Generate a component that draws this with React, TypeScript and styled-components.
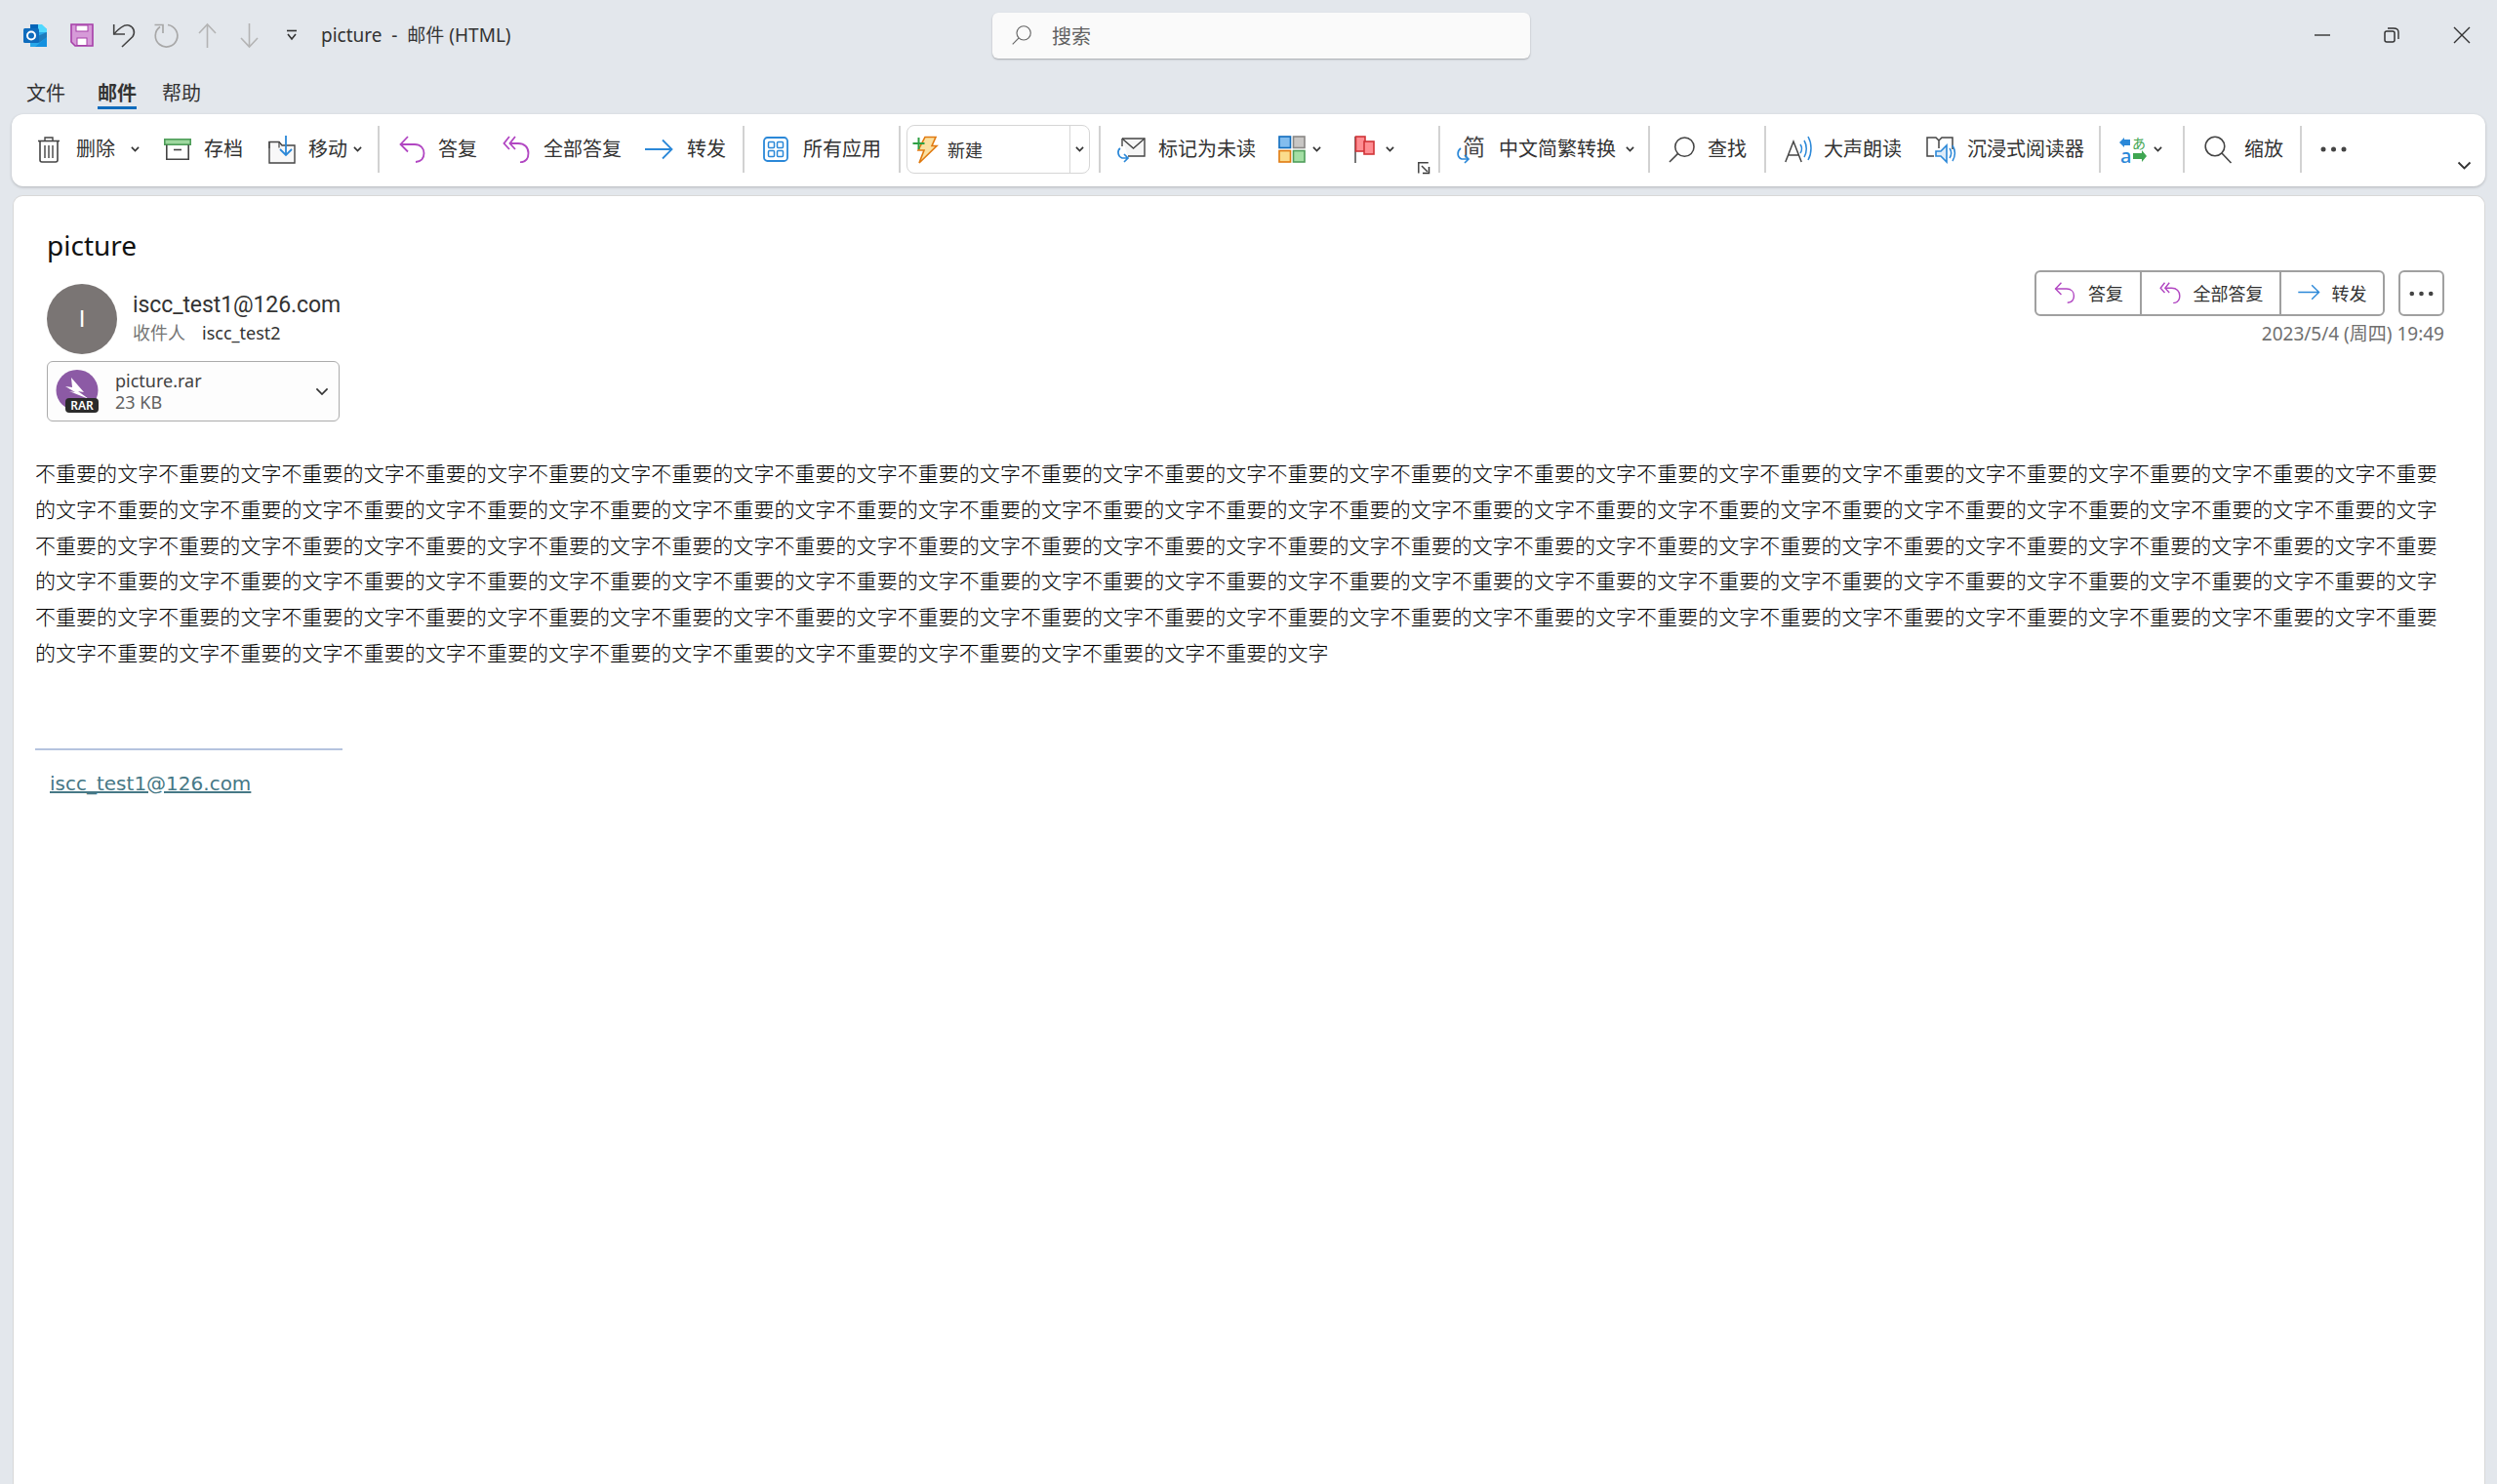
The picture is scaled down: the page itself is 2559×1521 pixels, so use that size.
import styled, { createGlobalStyle } from "styled-components"
import { ReactNode } from "react"

const GlobalStyle = createGlobalStyle`
  html, body {
    margin: 0;
    padding: 0;
    height: 100%;
    overflow: hidden;
    background: #e3e7ec;
  }
  body {
    font-family: "Noto Sans", "Noto Sans CJK SC", sans-serif;
    color: #242424;
  }
  * { box-sizing: border-box; }
`

const Page = styled.div`
  width: 2559px;
  height: 1521px;
  display: flex;
  flex-direction: column;
  background: #e3e7ec;
`

const TitleBar = styled.div`
  height: 72px;
  display: grid;
  grid-template-columns: 1017px 551px 1fr;
  align-items: center;
`

const QuickAccess = styled.div`
  display: flex;
  align-items: center;
  padding-left: 24px;
`

const QuickSlot = styled.span<{ $ml?: number }>`
  display: flex;
  margin-left: ${p => p.$ml ?? 0}px;
`

const WindowTitle = styled.span`
  margin-left: 24px;
  padding-bottom: 2px;
  font-size: 19px;
  color: #333;
  white-space: pre;
`

const SearchBox = styled.div`
  height: 47px;
  display: flex;
  align-items: center;
  gap: 21px;
  padding-left: 20px;
  background: #fafafa;
  border-radius: 6px;
  box-shadow: 0 1px 2px rgba(0, 0, 0, 0.28);
  font-size: 20px;
  color: #616161;
`

const WindowControls = styled.div`
  display: flex;
  align-items: center;
  justify-content: flex-end;
  gap: 55px;
  padding-right: 27px;
`

const MenuRow = styled.div`
  height: 45px;
  display: flex;
  gap: 26px;
  padding-left: 27px;
`

const MenuTab = styled.div<{ $active?: boolean }>`
  height: 40px;
  margin-left: ${p => (p.$active ? 7 : 0)}px;
  padding-top: 9px;
  line-height: 30px;
  font-size: 20px;
  font-weight: ${p => (p.$active ? 700 : 400)};
  color: #333;
  border-bottom: 3px solid ${p => (p.$active ? "#0f6cbd" : "transparent")};
`

const Ribbon = styled.div`
  height: 74px;
  margin: 0 12px;
  padding: 0 0 2px 26px;
  display: flex;
  align-items: center;
  background: #fff;
  border-radius: 12px;
  box-shadow: 0 1px 3px rgba(0, 0, 0, 0.22);
`

const RibbonItem = styled.div<{ $ml?: number; $gap?: number }>`
  display: flex;
  align-items: center;
  flex: none;
  margin-left: ${p => p.$ml ?? 0}px;
  gap: ${p => p.$gap ?? 13}px;
  font-size: 20px;
  line-height: 28px;
  color: #333;
  white-space: nowrap;
`

const Separator = styled.div<{ $ml: number }>`
  width: 2px;
  height: 48px;
  flex: none;
  margin-left: ${p => p.$ml}px;
  background: #d2d2d2;
`

const NewBox = styled.div`
  width: 188px;
  height: 50px;
  flex: none;
  margin-left: 6px;
  display: flex;
  align-items: center;
  border: 1px solid #d6d6d6;
  border-radius: 8px;
  font-size: 18px;
  color: #333;
`

const NewMain = styled.div`
  flex: 1;
  height: 100%;
  display: flex;
  align-items: center;
  gap: 10px;
  padding-left: 5px;
  border-right: 1px solid #d6d6d6;
`

const NewArrow = styled.div`
  width: 19px;
  display: flex;
  justify-content: center;
`

const Launcher = styled.span`
  display: flex;
  align-self: flex-end;
  margin: 0 0 11px 24px;
`

const Collapse = styled.span`
  display: flex;
  align-self: flex-end;
  margin: 0 14px 15px auto;
`

const Card = styled.div`
  flex: 1;
  margin: 9px 12px 0 13px;
  background: #fff;
  border: 1px solid #d8d8d8;
  border-bottom: 0;
  border-radius: 10px 10px 0 0;
`

const MessageHead = styled.div`
  display: flex;
  justify-content: space-between;
  padding: 31px 41px 0 34px;
`

const SubjectColumn = styled.div`
  display: flex;
  flex-direction: column;
`

const Subject = styled.div`
  height: 38px;
  line-height: 38px;
  font-size: 28px;
  color: #111;
`

const SenderRow = styled.div`
  display: flex;
  gap: 16px;
  margin-top: 21px;
`

const Avatar = styled.div`
  width: 72px;
  height: 72px;
  border-radius: 50%;
  display: flex;
  align-items: center;
  justify-content: center;
  background: #7a7574;
  color: #fff;
  font-family: "Liberation Sans", sans-serif;
  font-size: 24px;
`

const SenderText = styled.div`
  display: flex;
  flex-direction: column;
  padding-top: 6px;
`

const SenderName = styled.div`
  height: 31px;
  line-height: 32px;
  font-family: Roboto, sans-serif;
  font-size: 23px;
  letter-spacing: -0.1px;
  color: #333;
`

const Recipients = styled.div`
  display: flex;
  gap: 17px;
  line-height: 26px;
  font-size: 18px;
  color: #333;
`

const ToLabel = styled.span`
  color: #757575;
`

const Attachment = styled.div`
  width: 300px;
  height: 62px;
  margin-top: 7px;
  padding: 0 10px 0 8px;
  display: flex;
  align-items: center;
  border: 1px solid #ababab;
  border-radius: 6px;
  background: #fdfdfd;
`

const AttachmentInfo = styled.div`
  flex: 1;
  margin-left: 17px;
  font-size: 18px;
  line-height: 22px;
  color: #424242;
`

const AttachmentSize = styled.div`
  color: #616161;
`

const ActionColumn = styled.div`
  display: flex;
  flex-direction: column;
  align-items: flex-end;
  padding-top: 45px;
`

const ActionRow = styled.div`
  display: flex;
  gap: 14px;
`

const ActionGroup = styled.div`
  height: 47px;
  display: flex;
  border: 2px solid #a0a0a0;
  border-radius: 6px;
`

const ActionButton = styled.div<{ $width: number }>`
  width: ${p => p.$width}px;
  display: flex;
  align-items: center;
  justify-content: center;
  gap: 12px;
  padding-bottom: 2px;
  font-size: 18px;
  color: #333;
  & + & {
    border-left: 2px solid #a0a0a0;
  }
`

const MoreButton = styled.div`
  width: 47px;
  height: 47px;
  display: flex;
  align-items: center;
  justify-content: center;
  border: 2px solid #a0a0a0;
  border-radius: 6px;
`

const DateText = styled.div`
  margin-top: 6px;
  line-height: 24px;
  font-size: 19px;
  color: #707070;
`

const Body = styled.div`
  padding: 35px 0 0 22px;
`

const BodyText = styled.div`
  width: 2470px;
  font-size: 21px;
  font-weight: 300;
  letter-spacing: 0.04px;
  line-height: 36.8px;
  color: #000;
`

const Signature = styled.div`
  width: 315px;
  margin-top: 79px;
  border-top: 2px solid #b5c4df;
`

const SignatureLink = styled.a`
  display: block;
  margin: 21px 0 0 15px;
  font-family: "DejaVu Sans", sans-serif;
  font-size: 20px;
  line-height: 26px;
  color: #467886;
  text-decoration: underline;
`

const Svg = ({ w, h, children }: { w: number; h: number; children: ReactNode }) => (
  <svg width={w} height={h} viewBox={`0 0 ${w} ${h}`} fill="none" overflow="visible" style={{ flex: "none", display: "block" }}>
    {children}
  </svg>
)

const Chevron = ({ size = 9, color = "#333" }: { size?: number; color?: string }) => (
  <svg width={size} height={size * 0.6} viewBox="0 0 10 6" fill="none" style={{ flex: "none" }}>
    <path d="M1 1l4 4 4-4" stroke={color} strokeWidth={size > 12 ? 1.2 : 1.8} />
  </svg>
)

const OutlookIcon = () => (
  <Svg w={24} h={24}>
    <path d="M7 1h11l6 5v18H7z" fill="#28a8ea" />
    <path d="M7 1h8v6H7z" fill="#0364b8" />
    <path d="M15 1h4l5 5v3h-9z" fill="#50d9ff" />
    <path d="M12 24l12-10v10z" fill="#1490df" />
    <path d="M12 14l12-5v5l-8 6z" fill="#0a2767" opacity="0.35" />
    <rect x="0" y="5" width="16" height="15" rx="1.5" fill="#0f6cbd" />
    <circle cx="8" cy="12.5" r="4" stroke="#fff" strokeWidth="2" />
  </Svg>
)

const SaveIcon = () => (
  <Svg w={24} h={24}>
    <path d="M1 1h22v22H5l-4-4z" fill="#d69ad8" stroke="#a63fa8" strokeWidth="1.6" />
    <rect x="6" y="2" width="12" height="6" fill="#fff" stroke="#a63fa8" strokeWidth="1" />
    <rect x="7" y="15" width="10" height="7.5" fill="#fff" stroke="#a63fa8" strokeWidth="1" />
  </Svg>
)

const UndoIcon = () => (
  <Svg w={24} h={25}>
    <path d="M1.700 1v10H13" stroke="#444" strokeWidth="1.6" />
    <path d="M1.700 11C7 5 12 0.500 17 2c5 1.500 7 7 4 11.500L10 24" stroke="#444" strokeWidth="1.6" />
  </Svg>
)

const RedoIcon = () => (
  <Svg w={26} h={25}>
    <path d="M7 3.500A11.300 11.300 0 1 0 15 1.500" stroke="#a8a8a8" strokeWidth="1.7" />
    <path d="M1.500 1.500H10V10" stroke="#a8a8a8" strokeWidth="1.7" />
  </Svg>
)

const VerticalArrow = ({ down }: { down?: boolean }) => (
  <Svg w={19} h={25}>
    <g transform={down ? "rotate(180 9.5 12.5)" : undefined}>
      <path d="M9.5 1v24M1 10l8.5-9 8.5 9" stroke="#b4b4b4" strokeWidth="1.6" />
    </g>
  </Svg>
)

const CustomizeIcon = () => (
  <Svg w={12} h={12}>
    <path d="M1 1.5h10" stroke="#333" strokeWidth="1.6" />
    <path d="M2 5l4 5 4-5" stroke="#333" strokeWidth="1.6" />
  </Svg>
)

const SearchGlyph = ({ size, color }: { size: number; color: string }) => (
  <svg width={size} height={size} viewBox="0 0 28 28" fill="none" style={{ flex: "none" }}>
    <circle cx="17" cy="11" r="10" stroke={color} strokeWidth="1.6" />
    <path d="M10 18L1 27" stroke={color} strokeWidth="1.6" />
  </svg>
)

const TrashIcon = () => (
  <Svg w={24} h={28}>
    <path d="M1 5.5h22" stroke="#444" strokeWidth="1.6" />
    <path d="M8 5V2h8v3" stroke="#444" strokeWidth="1.4" />
    <path d="M3 6v19a2 2 0 0 0 2 2h14a2 2 0 0 0 2-2V6" stroke="#444" strokeWidth="1.6" />
    <path d="M8 10v13M12 10v13M16 10v13" stroke="#444" strokeWidth="1.4" />
  </Svg>
)

const ArchiveIcon = () => (
  <Svg w={28} h={22}>
    <rect x="0.8" y="0.8" width="26.4" height="5.4" fill="#9fd89f" stroke="#4f9e5a" strokeWidth="1.6" />
    <path d="M2.8 6.5v14.7h22.4V6.5" stroke="#444" strokeWidth="1.6" />
    <path d="M10 11.5h8" stroke="#444" strokeWidth="1.6" />
  </Svg>
)

const MoveIcon = () => (
  <Svg w={28} h={30}>
    <path d="M1 7.5h10l3 3.500h13v18H1z" fill="#f8f8f8" stroke="#444" strokeWidth="1.4" />
    <path d="M1 14V7.500h10v6" stroke="#444" strokeWidth="1.2" />
    <path d="M18 1v19M12 15l6 6 6-6" stroke="#2b88d8" strokeWidth="1.8" />
  </Svg>
)

const ReplyIcon = ({ w = 27, h = 28 }: { w?: number; h?: number }) => (
  <svg width={w} height={h} viewBox="0 0 27 28" fill="none" style={{ flex: "none" }}>
    <path d="M9 1L1.5 9 9 16.5" stroke="#b146c2" strokeWidth="1.8" />
    <path d="M1.5 9H16c6 0 9.5 4 9.5 9s-3 8.500-8.500 9" stroke="#b146c2" strokeWidth="1.8" />
  </svg>
)

const ReplyAllIcon = ({ w = 28, h = 28 }: { w?: number; h?: number }) => (
  <svg width={w} height={h} viewBox="0 0 28 28" fill="none" style={{ flex: "none" }}>
    <path d="M7 1L1.500 8 7 14M13 1L7.500 8 13 14" stroke="#b146c2" strokeWidth="1.8" />
    <path d="M7.500 8H16c6.500 0 10.500 4 10.500 10s-3 9-8.500 9.500" stroke="#b146c2" strokeWidth="1.8" />
  </svg>
)

const ForwardIcon = ({ w = 29, h = 22 }: { w?: number; h?: number }) => (
  <svg width={w} height={h} viewBox="0 0 29 22" fill="none" style={{ flex: "none" }}>
    <path d="M0 11h27M18 1.500L27.500 11 18 20.500" stroke="#2b88d8" strokeWidth="1.8" />
  </svg>
)

const AppsIcon = () => (
  <Svg w={26} h={26}>
    <rect x="1" y="1" width="24" height="24" rx="3.5" stroke="#2b88d8" strokeWidth="1.8" />
    <rect x="5.500" y="5.500" width="6" height="6" rx="1" stroke="#2b88d8" strokeWidth="1.5" />
    <rect x="14.500" y="5.500" width="6" height="6" rx="1" stroke="#2b88d8" strokeWidth="1.5" />
    <rect x="5.500" y="14.500" width="6" height="6" rx="1" stroke="#2b88d8" strokeWidth="1.5" />
    <rect x="14.500" y="14.500" width="6" height="6" rx="1" stroke="#2b88d8" strokeWidth="1.5" />
  </Svg>
)

const BoltIcon = () => (
  <Svg w={26} h={29}>
    <path d="M13 1.500h11l-4 9h5L7 28l5-13H6z" fill="#fbe0a0" stroke="#e07a10" strokeWidth="1.6" />
    <path d="M0.500 8h12M6.500 2v12" stroke="#2ea043" strokeWidth="2" />
  </Svg>
)

const MailIcon = () => (
  <Svg w={30} h={27}>
    <path d="M6 2h23v18H12" fill="#f6f6f6" stroke="#444" strokeWidth="1.4" />
    <path d="M6 10V2" stroke="#444" strokeWidth="1.4" />
    <path d="M6 2l11.500 10L29 2" stroke="#444" strokeWidth="1.4" />
    <path d="M4 12c-3 2-3 8 2 10h6M8 18l4 4-4 4" stroke="#2b88d8" strokeWidth="1.7" />
  </Svg>
)

const CategoryIcon = () => (
  <Svg w={28} h={28}>
    <rect x="1" y="1" width="11.500" height="11.500" fill="#83bdee" stroke="#0f6cbd" strokeWidth="1.6" />
    <rect x="15.500" y="1" width="11.500" height="11.500" fill="#c8c6c4" stroke="#8a8886" strokeWidth="1.6" />
    <rect x="1" y="15.500" width="11.500" height="11.500" fill="#fbdc8c" stroke="#e07a10" strokeWidth="1.6" />
    <rect x="15.500" y="15.500" width="11.500" height="11.500" fill="#a4dfa4" stroke="#4f9e5a" strokeWidth="1.6" />
  </Svg>
)

const FlagIcon = () => (
  <Svg w={21} h={28}>
    <path d="M1 1v27" stroke="#555" strokeWidth="1.6" />
    <rect x="1.500" y="1" width="9.500" height="15" fill="#ff8d92" stroke="#d13438" strokeWidth="1.6" />
    <rect x="10" y="6" width="10" height="13" fill="#ff8d92" stroke="#d13438" strokeWidth="1.6" />
  </Svg>
)

const LauncherIcon = () => (
  <Svg w={12} h={12}>
    <path d="M0.800 11.500V0.800h10" stroke="#444" strokeWidth="1.5" />
    <path d="M4 4l6 6" stroke="#444" strokeWidth="1.5" />
    <path d="M11.500 5v6.500H5" stroke="#333" strokeWidth="1.500" />
  </Svg>
)

const ConvertIcon = () => (
  <Svg w={30} h={30}>
    <text x="6" y="21" fontSize="23" fill="#444" fontFamily="'Noto Sans CJK SC', sans-serif">
      简
    </text>
    <path d="M4 14c-4 3-4 9 1 11h6M8 21l4 4-4 4" stroke="#2b88d8" strokeWidth="1.700" />
  </Svg>
)

const ReadAloudIcon = () => (
  <Svg w={27} h={28}>
    <path d="M0.800 27L9 6l8.200 21M3.500 20h11" stroke="#444" strokeWidth="1.500" />
    <path d="M16 9c2 3 2 6 0 9M20 5c3 5 3 12 0 17M24 1c4 7 4 17 0 24" stroke="#2b88d8" strokeWidth="1.500" />
  </Svg>
)

const ImmersiveIcon = () => (
  <Svg w={31} h={28}>
    <path d="M8 21H1V2h9l3 3v8M13 5l3-3h11v12" stroke="#444" strokeWidth="1.500" />
    <path d="M10 16h5l6-6v17l-6-6h-5z" fill="#deecf9" stroke="#2b88d8" strokeWidth="1.600" />
    <path d="M24 13c2 3 2 7 0 10M27 10c3 5 3 11 0 16" stroke="#2b88d8" strokeWidth="1.500" />
  </Svg>
)

const TranslateIcon = () => (
  <Svg w={28} h={30}>
    <path d="M3 5h8v6H3z" fill="#2b88d8" />
    <path d="M0 8l5-5v10z" fill="#2b88d8" />
    <text x="1" y="29" fontSize="20" fontWeight="500" fill="#2b88d8" fontFamily="'Noto Sans', sans-serif">
      a
    </text>
    <text x="13" y="14" fontSize="14" fill="#3fa652" fontFamily="'Noto Sans CJK JP', sans-serif">
      あ
    </text>
    <path d="M14 19h9v-3l5 6-5 6v-3h-9z" fill="#3fa652" />
  </Svg>
)

const ZoomIcon = () => (
  <Svg w={28} h={29}>
    <circle cx="11" cy="11" r="9.800" stroke="#444" strokeWidth="1.600" />
    <path d="M18 18l9.500 10" stroke="#444" strokeWidth="1.600" />
  </Svg>
)

const Dots = ({ width = 27, color = "#444" }: { width?: number; color?: string }) => (
  <svg width={width} height={6} viewBox="0 0 27 6" fill="none" style={{ flex: "none" }}>
    <circle cx="3" cy="3" r="2.500" fill={color} />
    <circle cx="13.500" cy="3" r="2.500" fill={color} />
    <circle cx="24" cy="3" r="2.500" fill={color} />
  </svg>
)

const MinimizeIcon = () => (
  <Svg w={16} h={16}>
    <path d="M0 8h16" stroke="#333" strokeWidth="1.400" />
  </Svg>
)

const RestoreIcon = () => (
  <Svg w={16} h={16}>
    <rect x="1" y="4" width="10" height="11" rx="2" stroke="#333" strokeWidth="1.500" />
    <path d="M4 1h6c3 0 5 1.500 5 4v7" stroke="#333" strokeWidth="1.400" />
  </Svg>
)

const CloseIcon = () => (
  <Svg w={18} h={18}>
    <path d="M1 1l16 16M17 1L1 17" stroke="#333" strokeWidth="1.400" />
  </Svg>
)

const RarIcon = () => (
  <Svg w={44} h={44}>
    <ellipse cx="22" cy="21" rx="21.500" ry="21" fill="#8c5aa5" />
    <path d="M16 8l13 15-6-1 11 8-20-8 6 1-10-6 7 1z" fill="#fff" />
    <rect x="10" y="29" width="34" height="15" rx="4" fill="#2b2b2b" />
    <text x="27" y="41" textAnchor="middle" fontSize="12" fontWeight="600" fill="#fff" fontFamily="'Noto Sans', sans-serif">
      RAR
    </text>
  </Svg>
)

export default function App() {
  const bodyText = "不重要的文字".repeat(108)

  return (
    <Page>
      <GlobalStyle />
      <TitleBar>
        <QuickAccess>
          <OutlookIcon />
          <QuickSlot $ml={24}>
            <SaveIcon />
          </QuickSlot>
          <QuickSlot $ml={19}>
            <UndoIcon />
          </QuickSlot>
          <QuickSlot $ml={18}>
            <RedoIcon />
          </QuickSlot>
          <QuickSlot $ml={20}>
            <VerticalArrow />
          </QuickSlot>
          <QuickSlot $ml={24}>
            <VerticalArrow down />
          </QuickSlot>
          <QuickSlot $ml={28}>
            <CustomizeIcon />
          </QuickSlot>
          <WindowTitle>picture  -  邮件 (HTML)</WindowTitle>
        </QuickAccess>
        <SearchBox>
          <SearchGlyph size={20} color="#666" />
          搜索
        </SearchBox>
        <WindowControls>
          <MinimizeIcon />
          <RestoreIcon />
          <CloseIcon />
        </WindowControls>
      </TitleBar>

      <MenuRow>
        <MenuTab>文件</MenuTab>
        <MenuTab $active>邮件</MenuTab>
        <MenuTab>帮助</MenuTab>
      </MenuRow>

      <Ribbon>
        <RibbonItem $gap={16}>
          <TrashIcon />
          删除
          <Chevron />
        </RibbonItem>
        <RibbonItem $ml={25}>
          <ArchiveIcon />
          存档
        </RibbonItem>
        <RibbonItem $ml={26} $gap={7}>
          <MoveIcon />
          <RibbonItem $ml={6} $gap={6}>
            移动
            <Chevron />
          </RibbonItem>
        </RibbonItem>
        <Separator $ml={16} />
        <RibbonItem $ml={20}>
          <ReplyIcon />
          答复
        </RibbonItem>
        <RibbonItem $ml={26} $gap={14}>
          <ReplyAllIcon />
          全部答复
        </RibbonItem>
        <RibbonItem $ml={24} $gap={14}>
          <ForwardIcon />
          转发
        </RibbonItem>
        <Separator $ml={17} />
        <RibbonItem $ml={19} $gap={15}>
          <AppsIcon />
          所有应用
        </RibbonItem>
        <Separator $ml={18} />
        <NewBox>
          <NewMain>
            <BoltIcon />
            新建
          </NewMain>
          <NewArrow>
            <Chevron />
          </NewArrow>
        </NewBox>
        <Separator $ml={9} />
        <RibbonItem $ml={16}>
          <MailIcon />
          标记为未读
        </RibbonItem>
        <RibbonItem $ml={23} $gap={7}>
          <CategoryIcon />
          <Chevron />
        </RibbonItem>
        <RibbonItem $ml={34} $gap={11}>
          <FlagIcon />
          <Chevron />
        </RibbonItem>
        <Launcher>
          <LauncherIcon />
        </Launcher>
        <Separator $ml={9} />
        <RibbonItem $ml={17}>
          <ConvertIcon />
          <RibbonItem $gap={10}>
            中文简繁转换
            <Chevron />
          </RibbonItem>
        </RibbonItem>
        <Separator $ml={14} />
        <RibbonItem $ml={19}>
          <SearchGlyph size={27} color="#444" />
          查找
        </RibbonItem>
        <Separator $ml={18} />
        <RibbonItem $ml={19}>
          <ReadAloudIcon />
          大声朗读
        </RibbonItem>
        <RibbonItem $ml={25} $gap={11}>
          <ImmersiveIcon />
          沉浸式阅读器
        </RibbonItem>
        <Separator $ml={15} />
        <RibbonItem $ml={19} $gap={7}>
          <TranslateIcon />
          <Chevron />
        </RibbonItem>
        <Separator $ml={21} />
        <RibbonItem $ml={20}>
          <ZoomIcon />
          缩放
        </RibbonItem>
        <Separator $ml={17} />
        <RibbonItem $ml={19}>
          <Dots />
        </RibbonItem>
        <Collapse>
          <Chevron size={15} />
        </Collapse>
      </Ribbon>

      <Card>
        <MessageHead>
          <SubjectColumn>
            <Subject>picture</Subject>
            <SenderRow>
              <Avatar>I</Avatar>
              <SenderText>
                <SenderName>iscc_test1@126.com</SenderName>
                <Recipients>
                  <ToLabel>收件人</ToLabel>
                  iscc_test2
                </Recipients>
              </SenderText>
            </SenderRow>
            <Attachment>
              <RarIcon />
              <AttachmentInfo>
                picture.rar
                <AttachmentSize>23 KB</AttachmentSize>
              </AttachmentInfo>
              <Chevron size={14} />
            </Attachment>
          </SubjectColumn>
          <ActionColumn>
            <ActionRow>
              <ActionGroup>
                <ActionButton $width={106}>
                  <ReplyIcon w={24} h={22} />
                  答复
                </ActionButton>
                <ActionButton $width={143}>
                  <ReplyAllIcon w={24} h={22} />
                  全部答复
                </ActionButton>
                <ActionButton $width={106}>
                  <ForwardIcon w={23} h={17} />
                  转发
                </ActionButton>
              </ActionGroup>
              <MoreButton>
                <Dots width={25} color="#444" />
              </MoreButton>
            </ActionRow>
            <DateText>2023/5/4 (周四) 19:49</DateText>
          </ActionColumn>
        </MessageHead>
        <Body>
          <BodyText>{bodyText}</BodyText>
          <Signature />
          <SignatureLink href="#">iscc_test1@126.com</SignatureLink>
        </Body>
      </Card>
    </Page>
  )
}
